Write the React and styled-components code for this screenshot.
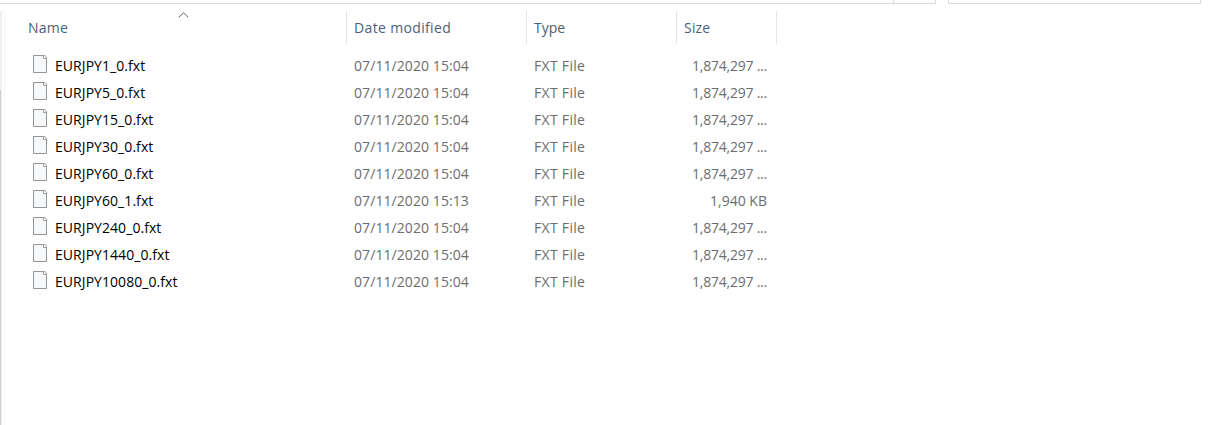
import styled, { createGlobalStyle } from "styled-components";

const files = [
  { name: "EURJPY1_0.fxt", date: "07/11/2020 15:04", size: "1,874,297 ..." },
  { name: "EURJPY5_0.fxt", date: "07/11/2020 15:04", size: "1,874,297 ..." },
  { name: "EURJPY15_0.fxt", date: "07/11/2020 15:04", size: "1,874,297 ..." },
  { name: "EURJPY30_0.fxt", date: "07/11/2020 15:04", size: "1,874,297 ..." },
  { name: "EURJPY60_0.fxt", date: "07/11/2020 15:04", size: "1,874,297 ..." },
  { name: "EURJPY60_1.fxt", date: "07/11/2020 15:13", size: "1,940 KB", short: true },
  { name: "EURJPY240_0.fxt", date: "07/11/2020 15:04", size: "1,874,297 ..." },
  { name: "EURJPY1440_0.fxt", date: "07/11/2020 15:04", size: "1,874,297 ..." },
  { name: "EURJPY10080_0.fxt", date: "07/11/2020 15:04", size: "1,874,297 ..." },
];

const FileIcon = () => (
  <svg width="14" height="18" viewBox="0 0 14 18">
    <path d="M0.5 0.5H11.8L13.5 2.2V17.5H0.5Z" fill="#f6f8f9" stroke="#939596" />
    <path d="M10.5 0.5V3.5H13.5" fill="#fff" stroke="#9a9c9d" />
  </svg>
);

const App = () => {
  return (
    <>
      <GlobalStyle />
      <Window>
        {/* bottom edge of the address bar and search box */}
        <TopBar>
          <AddressBox />
          <RefreshBox />
          <SearchBox />
        </TopBar>
        <Content>
          <NavEdge>
            <NavThumb />
          </NavEdge>
          <Pane>
            <Header>
              <HeaderCell $first $spacing="0.25px">
                Name
                <SortArrow width="11" height="6" viewBox="0 0 11 6">
                  <path d="M0.8 5.3L5.5 0.8L10.2 5.3" fill="none" stroke="#606060" />
                </SortArrow>
              </HeaderCell>
              <HeaderCell $spacing="0.35px">Date modified</HeaderCell>
              <HeaderCell>Type</HeaderCell>
              <HeaderCell $spacing="0.2px">Size</HeaderCell>
            </Header>
            {files.map((file) => (
              <Row key={file.name}>
                <NameCell>
                  <FileIcon />
                  <FileName>{file.name}</FileName>
                </NameCell>
                <Cell $spacing="0.08px">{file.date}</Cell>
                <Cell $spacing="0.3px">FXT File</Cell>
                <SizeCell $spacing={file.short ? "0" : "-0.23px"}>{file.size}</SizeCell>
              </Row>
            ))}
          </Pane>
        </Content>
      </Window>
    </>
  );
};

const GlobalStyle = createGlobalStyle`
  body {
    margin: 0;
    background: #fff;
    font-family: "Open Sans", "Noto Sans", sans-serif;
    font-size: 14px;
  }
  * {
    box-sizing: border-box;
  }
`;

const Window = styled.div`
  width: 1212px;
  height: 425px;
  display: flex;
  flex-direction: column;
  overflow: hidden;
`;

const TopBar = styled.div`
  display: flex;
  height: 4px;
`;

const AddressBox = styled.div`
  width: 894px;
  border: solid #d9d9d9;
  border-width: 0 1px 1px 0;
`;

const RefreshBox = styled.div`
  width: 42px;
  border: solid #d9d9d9;
  border-width: 0 1px 1px 0;
`;

const SearchBox = styled.div`
  width: 253px;
  margin-left: 12px;
  border: solid #d9d9d9;
  border-width: 0 1px 1px;
`;

const Content = styled.div`
  display: flex;
  flex: 1;
  padding-top: 7px;
`;

const NavEdge = styled.div`
  width: 5px;
  padding-top: 79px;
  display: flex;
  background: linear-gradient(90deg, #f0f0f0 2px, #fff 2px);
  border-right: 1px solid #f7f7f7;
`;

const NavThumb = styled.div`
  width: 1px;
  background: #cdcdcd;
`;

const Pane = styled.div`
  flex: 1;
`;

const columns = "342px 180px 150px 100px";

const Header = styled.div`
  display: grid;
  grid-template-columns: ${columns};
  height: 32px;
  margin-bottom: 9px;
`;

const HeaderCell = styled.div`
  position: relative;
  padding-left: ${({ $first }) => ($first ? "23px" : "7px")};
  border-right: 1px solid #e5e5e5;
  color: #4c607a;
  line-height: 33px;
  letter-spacing: ${({ $spacing }) => $spacing || "0"};
`;

const SortArrow = styled.svg`
  position: absolute;
  left: 173px;
  top: 1px;
`;

const Row = styled.div`
  display: grid;
  grid-template-columns: ${columns};
  height: 27px;
  line-height: 27px;
`;

const Cell = styled.div`
  padding-left: 7px;
  color: #6d6d6d;
  white-space: nowrap;
  letter-spacing: ${({ $spacing }) => $spacing || "0"};
`;

const NameCell = styled.div`
  display: flex;
  padding-left: 28px;

  svg {
    margin: 3px 8px 0 0;
  }
`;

const FileName = styled.span`
  color: #000;
  letter-spacing: 0.06px;
`;

const SizeCell = styled(Cell)`
  padding: 0 10px 0 0;
  text-align: right;
`;

export default App;
